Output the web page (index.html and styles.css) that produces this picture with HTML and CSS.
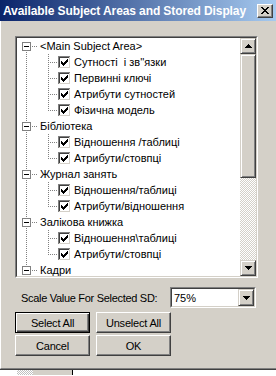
FILE: index.html
```html
<html lang="uk">

<head>
  <meta charset="UTF-8">
  <meta name="viewport" content="width=device-width, initial-scale=1.0">
  <title>Available Subject Areas and Stored Display</title>
  <link rel="stylesheet" href="styles.css">
</head>

<body>
  <svg class="defs" width="0" height="0">
    <symbol id="checked" viewBox="0 0 13 13">
      <rect width="13" height="13" fill="#ffffff" />
      <rect width="12" height="12" fill="#808080" />
      <rect x="1" y="1" width="11" height="11" fill="#d4d0c8" />
      <rect x="1" y="1" width="10" height="10" fill="#404040" />
      <rect x="2" y="2" width="9" height="9" fill="#ffffff" />
      <path d="M3 5H4V6H5V7H6V6H7V5H8V4H9V3H10V6H9V7H8V8H7V9H6V10H5V9H4V8H3Z" fill="#000" />
    </symbol>
    <symbol id="minus" viewBox="0 0 9 9">
      <rect x="0.5" y="0.5" width="8" height="8" fill="#fff" stroke="#808080" />
      <rect x="2" y="4" width="5" height="1" fill="#000" />
    </symbol>
    <symbol id="arrow-up" viewBox="0 0 7 4">
      <path d="M3 0h1v1h1v1h1v1h1v1H0v-1h1v-1h1v-1h1z" fill="#000" />
    </symbol>
    <symbol id="arrow-down" viewBox="0 0 7 4">
      <path d="M0 0h7v1h-1v1h-1v1h-1v1h-1v-1h-1v-1h-1v-1h-1z" fill="#000" />
    </symbol>
  </svg>

  <div class="window">
    <div class="titlebar">
      <span class="title">Available Subject Areas and Stored Display</span>
      <span class="close-btn">
        <svg width="8" height="7" viewBox="0 0 8 7">
          <path d="M0 0h2v1h-2z M6 0h2v1h-2z M1 1h2v1h-2z M5 1h2v1h-2z M2 2h4v1h-4z M3 3h2v1h-2z M2 4h4v1h-4z M1 5h2v1h-2z M5 5h2v1h-2z M0 6h2v1h-2z M6 6h2v1h-2z" fill="#000" />
        </svg>
      </span>
    </div>

    <div class="panel">
      <div class="tree-box">
        <div class="tree-inner">
          <ul class="tree">
            <li class="row root first">
              <span class="col-root"><svg class="expander"><use href="#minus" /></svg></span>
              <span class="label">&lt;Main Subject Area&gt;</span>
            </li>
            <li class="row child">
              <span class="col-root"></span><span class="col-child"></span>
              <svg class="check"><use href="#checked" /></svg>
              <span class="label">Сутності  і зв''язки</span>
            </li>
            <li class="row child">
              <span class="col-root"></span><span class="col-child"></span>
              <svg class="check"><use href="#checked" /></svg>
              <span class="label">Первинні ключі</span>
            </li>
            <li class="row child">
              <span class="col-root"></span><span class="col-child"></span>
              <svg class="check"><use href="#checked" /></svg>
              <span class="label">Атрибути сутностей</span>
            </li>
            <li class="row child last">
              <span class="col-root"></span><span class="col-child"></span>
              <svg class="check"><use href="#checked" /></svg>
              <span class="label">Фізична модель</span>
            </li>
            <li class="row root">
              <span class="col-root"><svg class="expander"><use href="#minus" /></svg></span>
              <span class="label">Бібліотека</span>
            </li>
            <li class="row child">
              <span class="col-root"></span><span class="col-child"></span>
              <svg class="check"><use href="#checked" /></svg>
              <span class="label">Відношення /таблиці</span>
            </li>
            <li class="row child last">
              <span class="col-root"></span><span class="col-child"></span>
              <svg class="check"><use href="#checked" /></svg>
              <span class="label">Атрибути/стовпці</span>
            </li>
            <li class="row root">
              <span class="col-root"><svg class="expander"><use href="#minus" /></svg></span>
              <span class="label">Журнал занять</span>
            </li>
            <li class="row child">
              <span class="col-root"></span><span class="col-child"></span>
              <svg class="check"><use href="#checked" /></svg>
              <span class="label">Відношення/таблиці</span>
            </li>
            <li class="row child last">
              <span class="col-root"></span><span class="col-child"></span>
              <svg class="check"><use href="#checked" /></svg>
              <span class="label">Атрибути/відношення</span>
            </li>
            <li class="row root">
              <span class="col-root"><svg class="expander"><use href="#minus" /></svg></span>
              <span class="label">Залікова книжка</span>
            </li>
            <li class="row child">
              <span class="col-root"></span><span class="col-child"></span>
              <svg class="check"><use href="#checked" /></svg>
              <span class="label">Відношення\таблиці</span>
            </li>
            <li class="row child last">
              <span class="col-root"></span><span class="col-child"></span>
              <svg class="check"><use href="#checked" /></svg>
              <span class="label">Атрибути/стовпці</span>
            </li>
            <li class="row root">
              <span class="col-root"><svg class="expander"><use href="#minus" /></svg></span>
              <span class="label">Кадри</span>
            </li>
          </ul>
          <div class="scrollbar">
            <span class="raised sb-btn"><svg class="arrow"><use href="#arrow-up" /></svg></span>
            <span class="raised sb-thumb"></span>
            <span class="sb-track"></span>
            <span class="raised sb-btn"><svg class="arrow"><use href="#arrow-down" /></svg></span>
          </div>
        </div>
      </div>

      <div class="scale-row">
        <span class="scale-label">Scale Value For Selected SD:</span>
        <div class="combo">
          <div class="combo-inner">
            <span class="combo-value">75%</span>
            <span class="raised combo-btn"><svg class="arrow"><use href="#arrow-down" /></svg></span>
          </div>
        </div>
      </div>

      <div class="button-grid">
        <button class="btn default">Select All</button>
        <button class="btn">Unselect All</button>
        <button class="btn">Cancel</button>
        <button class="btn">OK</button>
      </div>
    </div>
  </div>

  <div class="desktop">
    <span class="desktop-pattern"></span>
    <span class="desktop-block"></span>
  </div>
</body>

</html>
```

FILE: styles.css
```css
body {
  margin: 0;
  background: #ffffff;
  font-family: "Liberation Sans", Arial, sans-serif;
  font-size: 11px;
  color: #000;
}

.defs {
  position: absolute;
  width: 0;
  height: 0;
}

.window {
  width: 276px;
  background: #d4d0c8;
  border-bottom: 1px solid #404040;
}

.titlebar {
  height: 21px;
  display: flex;
  align-items: center;
  justify-content: space-between;
  padding: 0 3px 0 3px;
  background: linear-gradient(to right, #0a246a, #a6caf0);
}

.title {
  color: #ffffff;
  font-weight: bold;
  font-size: 12px;
  letter-spacing: -0.1px;
  white-space: nowrap;
}

.close-btn {
  width: 16px;
  height: 14px;
  box-sizing: border-box;
  display: flex;
  align-items: center;
  justify-content: center;
  background: #d4d0c8;
  border: 1px solid;
  border-color: #ffffff #404040 #404040 #ffffff;
  box-shadow: inset -1px -1px #808080;
}

.panel {
  height: 348px;
  box-sizing: border-box;
  padding: 15px 18px 0 14px;
  border-left: 1px solid #ffffff;
  border-bottom: 1px solid #808080;
}

/* list box */
.tree-box {
  width: 243px;
  height: 242px;
  box-sizing: border-box;
  border: 1px solid;
  border-color: #808080 #ffffff #ffffff #808080;
}

.tree-inner {
  height: 100%;
  box-sizing: border-box;
  border: 1px solid;
  border-color: #404040 #d4d0c8 #d4d0c8 #404040;
  display: flex;
  background: #ffffff;
  overflow: hidden;
}

.tree {
  flex: 1;
  margin: 0;
  padding: 0;
  list-style: none;
}

.row {
  display: flex;
  height: 16px;
}

.label {
  padding-left: 3px;
  line-height: 16px;
  white-space: pre;
}

.col-root,
.col-child {
  width: 20px;
  height: 16px;
  flex: none;
}

.col-root {
  background: repeating-linear-gradient(#808080 0 1px, transparent 1px 2px) 9px 0 / 1px 16px no-repeat;
}

.root .col-root {
  background:
    repeating-linear-gradient(to right, #808080 0 1px, transparent 1px 2px) 9px 8px / 11px 1px no-repeat,
    repeating-linear-gradient(#808080 0 1px, transparent 1px 2px) 9px 0 / 1px 16px no-repeat;
}

.root.first .col-root {
  background:
    repeating-linear-gradient(to right, #808080 0 1px, transparent 1px 2px) 9px 8px / 11px 1px no-repeat,
    repeating-linear-gradient(#808080 0 1px, transparent 1px 2px) 9px 8px / 1px 8px no-repeat;
}

.col-child {
  background:
    repeating-linear-gradient(to right, #808080 0 1px, transparent 1px 2px) 11px 8px / 9px 1px no-repeat,
    repeating-linear-gradient(#808080 0 1px, transparent 1px 2px) 11px 0 / 1px 16px no-repeat;
}

.last .col-child {
  background:
    repeating-linear-gradient(to right, #808080 0 1px, transparent 1px 2px) 11px 8px / 9px 1px no-repeat,
    repeating-linear-gradient(#808080 0 1px, transparent 1px 2px) 11px 0 / 1px 9px no-repeat;
}

.expander {
  display: block;
  width: 9px;
  height: 9px;
  margin: 4px 0 0 5px;
}

.check {
  width: 13px;
  height: 13px;
  flex: none;
  margin: 2px 0 0 1px;
}

/* scrollbar */
.raised {
  box-sizing: border-box;
  background: #d4d0c8;
  border: 1px solid;
  border-color: #d4d0c8 #404040 #404040 #d4d0c8;
  box-shadow: inset 1px 1px #ffffff, inset -1px -1px #808080;
}

.scrollbar {
  width: 16px;
  flex: none;
  display: flex;
  flex-direction: column;
}

.sb-btn {
  height: 16px;
  display: flex;
  align-items: center;
  justify-content: center;
}

.sb-thumb {
  height: 124px;
}

.sb-track {
  flex: 1;
  background: repeating-conic-gradient(#d4d0c8 0 25%, #ffffff 0 50%) 0 0 / 2px 2px;
}

.arrow {
  width: 7px;
  height: 4px;
}

/* scale combo */
.scale-row {
  margin-top: 9px;
  height: 21px;
  display: flex;
  align-items: center;
}

.scale-label {
  flex: 1;
  padding-left: 6px;
  letter-spacing: -0.3px;
}

.combo {
  width: 86px;
  height: 21px;
  margin-right: 2px;
  box-sizing: border-box;
  border: 1px solid;
  border-color: #808080 #ffffff #ffffff #808080;
}

.combo-inner {
  height: 100%;
  box-sizing: border-box;
  border: 1px solid;
  border-color: #404040 #d4d0c8 #d4d0c8 #404040;
  background: #ffffff;
  display: flex;
  align-items: center;
}

.combo-value {
  flex: 1;
  padding-left: 2px;
}

.combo-btn {
  width: 16px;
  height: 17px;
  display: flex;
  align-items: center;
  justify-content: center;
}

/* buttons */
.button-grid {
  margin: 4px 0 0 0;
  display: grid;
  grid-template-columns: 75px 75px;
  grid-auto-rows: 21px;
  column-gap: 6px;
  row-gap: 2px;
}

.btn {
  font-family: "Liberation Sans", Arial, sans-serif;
  font-size: 11px;
  letter-spacing: -0.2px;
  color: #000;
  padding: 0;
  background: #d4d0c8;
  border: 1px solid;
  border-color: #ffffff #404040 #404040 #ffffff;
  box-shadow: inset -1px -1px #808080;
}

.default {
  border-color: #000;
  box-shadow: inset 1px 1px #ffffff, inset -1px -1px #404040, inset -2px -2px #808080;
}

/* what lies below the dialog */
.desktop {
  height: 5px;
  display: flex;
  padding-left: 17px;
}

.desktop-pattern {
  width: 16px;
  background: repeating-conic-gradient(#c0c0c0 0 25%, #ffffff 0 50%) 0 0 / 2px 2px;
}

.desktop-block {
  width: 39px;
  background: #d4d0c8;
  border-right: 1px solid #000;
}
```
